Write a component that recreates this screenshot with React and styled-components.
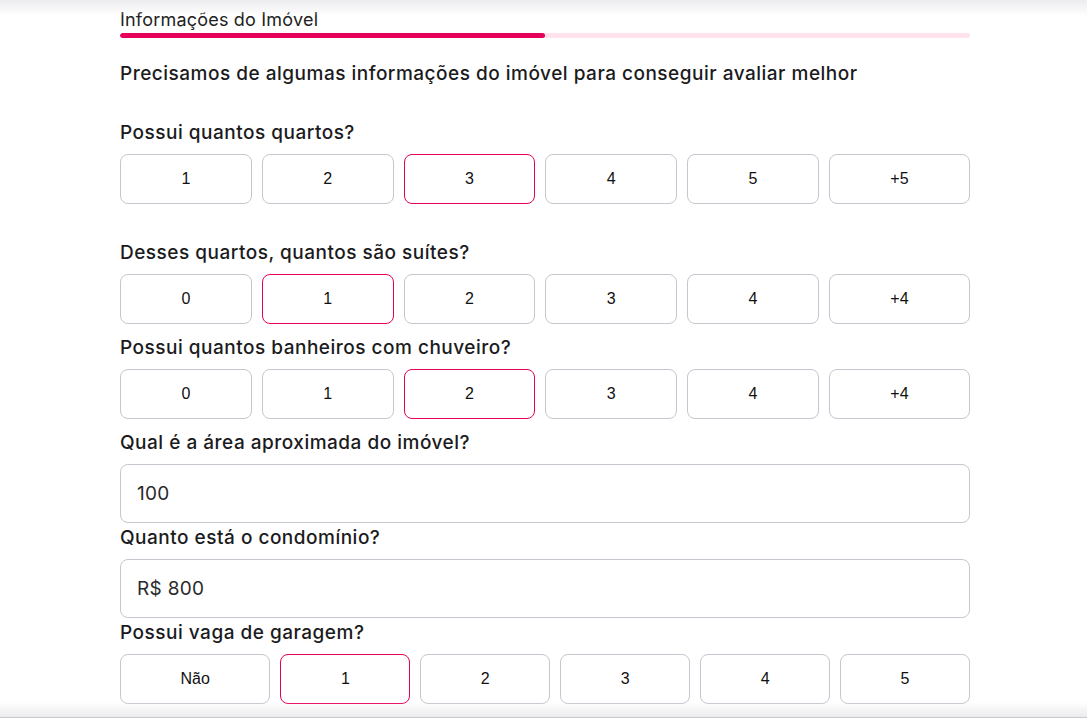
import React from 'react';
import styled, { createGlobalStyle } from 'styled-components';

const GlobalStyle = createGlobalStyle`
  html, body {
    margin: 0;
    padding: 0;
    background: #fff;
  }
  body {
    font-family: "Inter", "Noto Sans", sans-serif;
    color: #1d1d1f;
  }
  * {
    box-sizing: border-box;
  }
`;

const Frame = styled.div`
  position: relative;
  height: 718px;
  overflow: hidden;
  border-bottom: 1px solid #c9c9d1;
`;

const TopShade = styled.div`
  position: absolute;
  left: 0;
  right: 0;
  top: 0;
  height: 16px;
  background: linear-gradient(to bottom, #ececef, rgba(255, 255, 255, 0));
  pointer-events: none;
`;

const BottomShade = styled.div`
  position: absolute;
  left: 0;
  right: 0;
  bottom: 0;
  height: 15px;
  background: linear-gradient(to top, #ebebee, rgba(255, 255, 255, 0));
  pointer-events: none;
`;

const Content = styled.div`
  width: 850px;
  margin-left: 120px;
  padding-top: 8px;
`;

const StepTitle = styled.h1`
  margin: 0;
  font-size: 18px;
  line-height: 24px;
  font-weight: 400;
  letter-spacing: 0.2px;
  color: #222;
`;

const Progress = styled.div`
  margin-top: 1px;
  height: 5px;
  border-radius: 3px;
  background: #ffe2ec;
  overflow: hidden;
`;

const ProgressFill = styled.div`
  height: 100%;
  border-radius: 3px;
  background: #e6005c;
`;

const Intro = styled.p`
  margin: 24px 0 35px;
  font-size: 19px;
  line-height: 24px;
  font-weight: 500;
  letter-spacing: 0.5px;
  color: #1b1b1d;
`;

const Section = styled.section`
  margin-bottom: ${(p) => p.$after}px;
`;

const Label = styled.h2`
  margin: 0 0 9px;
  font-size: 19px;
  line-height: 24px;
  font-weight: 500;
  letter-spacing: 0.5px;
  color: #1b1b1d;
`;

const Options = styled.div`
  display: flex;
  gap: 10px;
`;

const Option = styled.button`
  flex: 1 1 auto;
  height: 50px;
  padding: 0 20px;
  background: #fff;
  border: 1px solid ${(p) => (p.$active ? '#e6005c' : '#c6c6cf')};
  border-radius: 8px;
  font-family: "Liberation Sans", Arial, sans-serif;
  font-size: 16px;
  color: #111;
  cursor: pointer;
`;

const Field = styled.input`
  display: block;
  width: 100%;
  height: 59px;
  padding: 0 16px;
  border: 1px solid #c6c6cf;
  border-radius: 8px;
  font-family: "Inter", "Noto Sans", sans-serif;
  font-size: 19px;
  letter-spacing: 0.3px;
  color: #2a2a2d;
  outline: none;
`;

const questions = [
  { label: 'Possui quantos quartos?', options: ['1', '2', '3', '4', '5', '+5'], selected: '3', after: 37 },
  { label: 'Desses quartos, quantos são suítes?', options: ['0', '1', '2', '3', '4', '+4'], selected: '1', after: 12 },
  { label: 'Possui quantos banheiros com chuveiro?', options: ['0', '1', '2', '3', '4', '+4'], selected: '2', after: 12 },
];

const ChoiceQuestion = ({ label, options, selected, after }) => (
  <Section $after={after}>
    <Label>{label}</Label>
    <Options>
      {options.map((o) => (
        <Option key={o} $active={o === selected}>{o}</Option>
      ))}
    </Options>
  </Section>
);

const App = () => {
  return (
    <>
      <GlobalStyle />
      <Frame>
        <Content>
          <StepTitle>Informações do Imóvel</StepTitle>
          <Progress>
            <ProgressFill style={{ width: '50%' }} />
          </Progress>
          <Intro>Precisamos de algumas informações do imóvel para conseguir avaliar melhor</Intro>

          {questions.map((q) => (
            <ChoiceQuestion key={q.label} {...q} />
          ))}

          <Section $after={3}>
            <Label>Qual é a área aproximada do imóvel?</Label>
            <Field defaultValue="100" />
          </Section>

          <Section $after={3}>
            <Label>Quanto está o condomínio?</Label>
            <Field defaultValue="R$ 800" />
          </Section>

          <ChoiceQuestion
            label="Possui vaga de garagem?"
            options={['Não', '1', '2', '3', '4', '5']}
            selected="1"
            after={0}
          />
        </Content>
        <TopShade />
        <BottomShade />
      </Frame>
    </>
  );
};

export default App;
